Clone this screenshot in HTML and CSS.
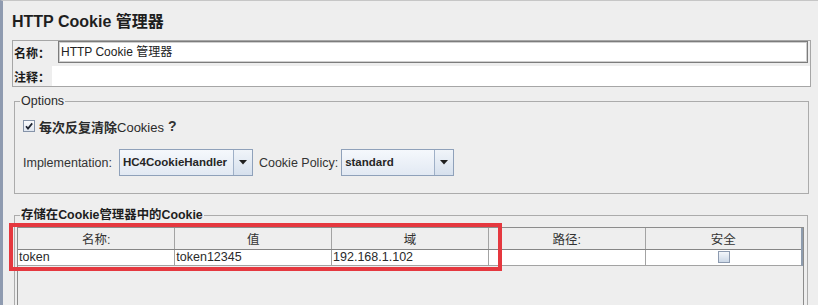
FILE: index.html
```html
<!DOCTYPE html>
<html lang="zh-CN">
<head>
<meta charset="utf-8">
<title>HTTP Cookie 管理器</title>
<link rel="stylesheet" href="styles.css">
</head>
<body>
<div class="window">
  <h1 class="title">HTTP Cookie 管理器</h1>

  <div class="namepanel">
    <div class="name-row">
      <span class="lbl name-lbl">名称：</span>
      <div class="textfield">HTTP Cookie 管理器</div>
    </div>
    <div class="comment-row">
      <span class="lbl comment-lbl">注释：</span>
      <div class="plainfield"></div>
    </div>
  </div>

  <fieldset class="group options">
    <legend>Options</legend>
    <div class="check-row">
      <span class="checkbox">
        <svg width="10" height="10" viewBox="0 0 10 10"><path d="M2 5.2 L4 7.6 L8.2 2.4" fill="none" stroke="#1e2430" stroke-width="1.7"/></svg>
      </span>
      <span class="check-text"><span class="cjk-bold">每次反复清除</span>Cookies</span>
      <span class="qmark">?</span>
    </div>
    <div class="combo-row">
      <span class="combo-lbl">Implementation:</span>
      <div class="combo impl">
        <span class="combo-val">HC4CookieHandler</span>
        <span class="combo-btn"><svg width="8" height="5" viewBox="0 0 8 5"><path d="M0 0 H8 L4 4.5 Z" fill="#1f1f1f"/></svg></span>
      </div>
      <span class="combo-lbl policy-lbl">Cookie Policy:</span>
      <div class="combo policy">
        <span class="combo-val">standard</span>
        <span class="combo-btn"><svg width="8" height="5" viewBox="0 0 8 5"><path d="M0 0 H8 L4 4.5 Z" fill="#1f1f1f"/></svg></span>
      </div>
    </div>
  </fieldset>

  <fieldset class="group cookies">
    <legend>存储在Cookie管理器中的Cookie</legend>
    <div class="scrollpane">
      <table class="grid">
        <thead>
          <tr><th>名称:</th><th>值</th><th>域</th><th>路径:</th><th>安全</th></tr>
        </thead>
        <tbody>
          <tr>
            <td>token</td>
            <td>token12345</td>
            <td>192.168.1.102</td>
            <td></td>
            <td class="center"><span class="cell-check"></span></td>
          </tr>
        </tbody>
      </table>
    </div>
  </fieldset>

  <div class="highlight"></div>
</div>
</body>
</html>
```

FILE: styles.css
```css
* { box-sizing: border-box; }

html, body {
  margin: 0;
  padding: 0;
  background: #eeeeee;
}

body {
  font-family: "Liberation Sans", "Noto Sans CJK SC", sans-serif;
  font-size: 12px;
  color: #2b2b2b;
}

.window {
  position: relative;
  height: 305px;
  overflow: hidden;
  border-left: 3px solid #8f9bb0;
  border-top: 1px solid #c6c6c6;
  background: #eeeeee;
}

.title {
  margin: 11px 0 0 9px;
  font-size: 16px;
  line-height: 20px;
  font-weight: bold;
  color: #1e1e1e;
}

/* name / comment panel */
.namepanel {
  margin: 8px 7px 0 9px;
  border: 1px solid #a6a6a6;
  display: flex;
  flex-direction: column;
  gap: 3px;
}

.name-row, .comment-row {
  display: flex;
  align-items: center;
}

.name-row { height: 22px; }
.comment-row { height: 20px; }

.lbl {
  font-weight: bold;
  color: #1a1a1a;
  padding-left: 1px;
  font-size: 12px;
}

.name-lbl { width: 45px; flex: none; }
.comment-lbl { width: 39px; flex: none; }

.textfield {
  flex: 1;
  height: 22px;
  margin-right: 2px;
  background: #ffffff;
  border: 1px solid #7c7c7c;
  box-shadow: inset 0 0 0 1px #cfcfcf;
  padding-left: 2px;
  line-height: 20px;
  color: #222;
}

.plainfield {
  flex: 1;
  height: 20px;
  background: #ffffff;
}

/* titled groups */
.group {
  margin: 0 9px 0 11px;
  padding: 0;
  border: 1px solid #ababab;
  min-width: 0;
}

.group legend {
  margin-left: 3px;
  padding: 0 1px;
  line-height: 14px;
  font-size: 12.5px;
  color: #2a2a2a;
}

.options {
  margin-top: 7px;
  padding: 10px 9px 17px 2px;
}

.check-row {
  display: flex;
  align-items: center;
  height: 16px;
  padding-left: 6px;
}

.checkbox {
  width: 12px;
  height: 12px;
  border: 1px solid #8593a8;
  background: linear-gradient(#fbfcfe, #dfe6f0);
  display: flex;
  align-items: center;
  justify-content: center;
  flex: none;
}

.check-text {
  margin-left: 4px;
  font-size: 13px;
  color: #2a2a2a;
}

.cjk-bold { font-weight: bold; }

.qmark {
  margin-left: 4px;
  font-weight: bold;
  font-size: 14px;
  color: #333;
}

.combo-row {
  display: flex;
  align-items: center;
  margin-top: 15px;
  height: 27px;
  padding-left: 6px;
}

.combo-lbl {
  font-size: 12.5px;
  color: #333;
  margin-right: 7px;
}

.combo-lbl.policy-lbl { margin-right: 3px; }

.combo {
  display: flex;
  height: 27px;
  border: 1px solid #8fa1ba;
  background: linear-gradient(#f5f8fc, #e2e9f3);
  margin-right: 6px;
}

.combo.impl { width: 134px; }
.combo.policy { width: 113px; }

.combo-val {
  flex: 1;
  padding-left: 3px;
  line-height: 25px;
  font-weight: bold;
  font-size: 11.5px;
  color: #262626;
  white-space: nowrap;
  overflow: hidden;
}

.combo-btn {
  width: 19px;
  flex: none;
  border-left: 1px solid #9fb0c7;
  background: linear-gradient(#f0f4f9, #d6e0ed);
  display: flex;
  align-items: center;
  justify-content: center;
}

/* cookie table group */
.cookies {
  margin-top: 14px;
  margin-right: 10px;
  padding: 5px 3px 0 2px;
  height: 140px;
}

.cookies legend {
  font-weight: bold;
  font-size: 12.4px;
  color: #1e1e1e;
}

.scrollpane {
  height: 120px;
  border: 1px solid #8c8c8c;
  border-bottom: none;
  background: #eeeeee;
}

.grid {
  width: 100%;
  border-collapse: collapse;
  table-layout: fixed;
  font-size: 12.5px;
}

.grid th {
  height: 21px;
  padding: 0;
  font-weight: normal;
  color: #333;
  text-align: center;
  background: #eeeeee;
  border-right: 1px solid #a3a3a3;
  border-bottom: 1px solid #858585;
}

.grid td {
  height: 16px;
  padding: 0 0 0 1px;
  background: #ffffff;
  color: #2a2a2a;
  line-height: 15px;
  border-right: 1px solid #a3a3a3;
  border-bottom: 1px solid #a3a3a3;
  white-space: nowrap;
}

.grid th:last-child,
.grid td:last-child {
  border-right: 2px solid #8e9cae;
}

.grid td.center { text-align: center; }

.cell-check {
  display: inline-block;
  vertical-align: middle;
  width: 12px;
  height: 12px;
  border: 1px solid #8d9bb0;
  background: linear-gradient(#f4f7fb, #ccd8e7);
}

/* annotation overlay */
.highlight {
  position: absolute;
  left: 6px;
  top: 222px;
  width: 493px;
  height: 48px;
  border: 4px solid #e5383f;
}
```
